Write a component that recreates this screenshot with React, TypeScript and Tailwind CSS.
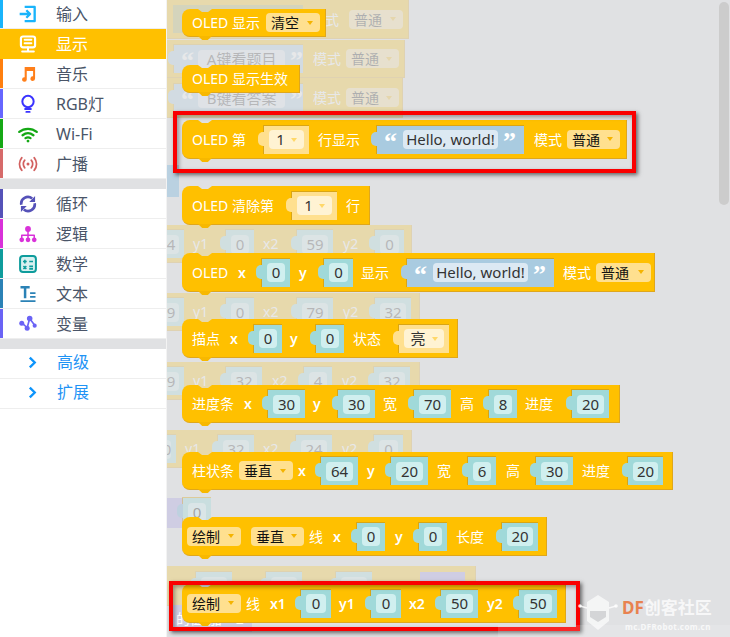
import type { JSX, ReactNode } from 'react'

const FONT = '[font-family:"Noto_Sans","Noto_Sans_CJK_SC",sans-serif]'

// Toolbox icons, drawn on a 24 box.
const Svg = ({ children, className }: { children: ReactNode; className: string }): JSX.Element => (
  <svg viewBox="0 0 24 24" className={`h-[20px] w-[20px] ${className}`} fill="none" stroke="currentColor" strokeLinecap="round" strokeLinejoin="round">
    {children}
  </svg>
)

const icons: Record<string, JSX.Element> = {
  input: (
    <Svg className="text-[#19b4fb]">
      <path d="M8 3.500h12v17H8" strokeWidth="2.800" strokeLinecap="butt" />
      <path d="M2 12h12M10 7.500l4.500 4.500-4.500 4.500" strokeWidth="2.800" strokeLinecap="butt" />
    </Svg>
  ),
  display: (
    <Svg className="text-white">
      <rect x="3.500" y="3" width="17" height="13" rx="2.500" strokeWidth="2.600" />
      <path d="M8 7h8M8 11h8M12 16v4M5 21h14" strokeWidth="2.400" />
    </Svg>
  ),
  music: (
    <Svg className="text-[#ff7f1a]">
      <path d="M8 3.500h12.500v14a2.800 2.800 0 1 1-2.400-2.700V8.500H10.500v10a2.800 2.800 0 1 1-2.500-2.700z" fill="currentColor" stroke="none" />
    </Svg>
  ),
  light: (
    <Svg className="text-[#3a33ff]">
      <circle cx="12" cy="9" r="6.800" strokeWidth="2.400" />
      <path d="M8.500 18h7M10 21.500h4" strokeWidth="2.200" />
    </Svg>
  ),
  wifi: (
    <Svg className="text-[#15a815]">
      <path d="M1.500 9.500c6-5 15-5 21 0M5.500 13.500c4-3.200 9-3.200 13 0M9 17c2-1.300 4-1.300 6 0" strokeWidth="2.700" />
      <circle cx="12" cy="20.500" r="1.700" fill="currentColor" stroke="none" />
    </Svg>
  ),
  radio: (
    <Svg className="text-[#d2605f]">
      <circle cx="12" cy="12" r="1.800" fill="currentColor" stroke="none" />
      <path d="M8 7.500c-2 2.500-2 6.500 0 9M16 7.500c2 2.500 2 6.500 0 9M4.500 4.500c-3.500 4.500-3.500 10.500 0 15M19.500 4.500c3.500 4.500 3.500 10.500 0 15" strokeWidth="2.300" />
    </Svg>
  ),
  loop: (
    <Svg className="text-[#5552b8]">
      <path d="M4 13a8 8 0 0 1 13-7.500M20 11a8 8 0 0 1-13 7.500" strokeWidth="3.200" strokeLinecap="butt" />
      <path d="M20.500 2.500v7h-7zM3.500 21.500v-7h7z" fill="currentColor" stroke="none" />
    </Svg>
  ),
  logic: (
    <Svg className="text-[#d931d9]">
      <circle cx="12" cy="6" r="3.500" fill="currentColor" stroke="none" />
      <circle cx="4.500" cy="19" r="2.800" fill="currentColor" stroke="none" />
      <circle cx="12" cy="19" r="2.800" fill="currentColor" stroke="none" />
      <circle cx="19.500" cy="19" r="2.800" fill="currentColor" stroke="none" />
      <path d="M12 9v8M4.500 17v-3.500h15V17" strokeWidth="1.800" />
    </Svg>
  ),
  math: (
    <Svg className="text-[#0e9c9c]">
      <rect x="2.500" y="2.500" width="19" height="19" rx="3.500" fill="#d8f1f1" strokeWidth="2.400" />
      <path d="M6 9h4.500M8.250 6.800v4.500M13.500 9H18M6.500 14.500l3.500 3.500M10 14.500L6.500 18M13.500 14.800H18M13.500 17.800H18" strokeWidth="1.900" strokeLinecap="butt" />
    </Svg>
  ),
  text: (
    <Svg className="text-[#2b82b6]">
      <path d="M3 4h11M8.500 4v13" strokeWidth="3" strokeLinecap="butt" />
      <path d="M14.500 11H21M14.500 15.500H21M3 20.500h18" strokeWidth="2.200" strokeLinecap="butt" />
    </Svg>
  ),
  variable: (
    <Svg className="text-[#6a63f5]">
      <path d="M5 11l6 5.500 3-11 6 8" strokeWidth="2" />
      <circle cx="4.500" cy="11" r="3" fill="currentColor" stroke="none" />
      <circle cx="11" cy="17" r="3" fill="currentColor" stroke="none" />
      <circle cx="14" cy="5.500" r="3.300" fill="currentColor" stroke="none" />
      <circle cx="20" cy="14" r="2.500" fill="currentColor" stroke="none" />
    </Svg>
  ),
}

const Row = ({ name, icon, stripe, first }: { name: string; icon: string; stripe: string; first?: boolean }): JSX.Element => (
  <div className={`flex items-center border-b border-[#eeeeee] ${first ? 'h-[29px]' : 'h-[30px]'}`}>
    <span className={`h-full w-[3px] ${stripe}`} />
    <span className="ml-[14px] flex w-[22px] justify-center">{icons[icon]}</span>
    <span className="ml-[17px] text-[16px] text-[#4a5568]">{name}</span>
  </div>
)

const More = ({ name }: { name: string }): JSX.Element => (
  <div className="flex h-[30px] items-center border-b border-[#eeeeee] pb-[3px]">
    <svg viewBox="0 0 10 14" className="ml-[28px] h-[13px] w-[9px]" fill="none" stroke="#0d94fb" strokeWidth="2.600">
      <path d="M2 1.500l5.500 5.500L2 12.500" />
    </svg>
    <span className="ml-[20px] text-[16px] text-[#1e93f5]">{name}</span>
  </div>
)

const Sidebar = (): JSX.Element => (
  <aside className="z-10 h-full w-[167px] shrink-0 border-r border-[#f3f3f3] bg-white">
    <Row first name="输入" icon="input" stripe="bg-[#19b4fb]" />
    <div className="flex h-[30px] items-center bg-[#ffc000]">
      <span className="ml-[17px] flex w-[22px] justify-center">{icons.display}</span>
      <span className="ml-[17px] text-[16px] text-white">显示</span>
    </div>
    <Row name="音乐" icon="music" stripe="bg-[#ff7f0e]" />
    <Row name="RGB灯" icon="light" stripe="bg-[#6666ff]" />
    <Row name="Wi-Fi" icon="wifi" stripe="bg-[#15a815]" />
    <Row name="广播" icon="radio" stripe="bg-[#d66a6a]" />
    <div className="h-[10px] bg-[#e0e1e3]" />
    <Row name="循环" icon="loop" stripe="bg-[#5552b8]" />
    <Row name="逻辑" icon="logic" stripe="bg-[#d931d9]" />
    <Row name="数学" icon="math" stripe="bg-[#0e9c9c]" />
    <Row name="文本" icon="text" stripe="bg-[#2b82b6]" />
    <Row name="变量" icon="variable" stripe="bg-[#6a63f5]" />
    <div className="h-[10px] bg-[#e0e1e3]" />
    <More name="高级" />
    <More name="扩展" />
  </aside>
)

// --- blocks ---

const Block = ({ className, children, plain }: { className: string; children: ReactNode; plain?: boolean }): JSX.Element => (
  <div
    className={`absolute flex items-center border-r border-b border-[#dfa71c] bg-[#ffc000] text-[14px] text-white ${
      plain ? '' : 'rounded-l-[8px] [clip-path:polygon(0_0,16px_0,20px_3px,26px_3px,30px_0,100%_0,100%_100%,30px_100%,26px_calc(100%_+_4px),20px_calc(100%_+_4px),16px_100%,0_100%)]'
    } ${className}`}
  >
    {children}
    {!plain && <span className="absolute top-full left-[16px] h-[4px] w-[14px] bg-[#f7b800] [clip-path:polygon(0_0,100%_0,70%_100%,30%_100%)]" />}
  </div>
)

const T = ({ className, children }: { className: string; children: ReactNode }): JSX.Element => (
  <span className={`shrink-0 whitespace-pre ${className}`}>{children}</span>
)

const Tab = ({ className }: { className: string }): JSX.Element => (
  <span className={`absolute top-[6px] -left-[6px] h-[14px] w-[7px] rounded-l-[5px] ${className}`} />
)

const Caret = ({ className }: { className: string }): JSX.Element => (
  <span className={`h-0 w-0 border-x-[3px] border-t-[4px] border-x-transparent ${className}`} />
)

// Number socket; tone switches to the pale yellow field sockets.
const Socket = ({ className, value, yellow }: { className: string; value: string; yellow?: boolean }): JSX.Element => (
  <span
    className={`relative flex h-[29px] shrink-0 items-center justify-center border-t border-l border-[#d9a514] ${yellow ? 'bg-[#ffe08f]' : 'bg-[#a0d9d9]'} ${className}`}
  >
    <Tab className={yellow ? 'bg-[#ffe08f]' : 'bg-[#a0d9d9]'} />
    <span className={`mx-[5px] flex h-[19px] grow items-center justify-center rounded-[4px] text-[15px] text-[#333333] ${yellow ? 'gap-[6px] bg-[#fff3d3]' : 'bg-[#d0efef]'}`}>
      {value}
      {yellow && <Caret className="border-t-[#ffd869]" />}
    </span>
  </span>
)

const Str = ({ className, value }: { className: string; value: string }): JSX.Element => (
  <span className={`relative flex h-[29px] shrink-0 items-center border-t border-l border-[#d9a514] bg-[#a9cbe0] ${className}`}>
    <Tab className="bg-[#a9cbe0]" />
    <span className="ml-[7px] w-[19px] translate-y-[2px] text-[26px] leading-[20px] font-bold text-white [font-family:'Liberation_Serif',serif]">“</span>
    <span className="flex h-[19px] w-[95px] items-center justify-center rounded-[4px] bg-[#dce9f3] text-[15px] text-[#333333]">{value}</span>
    <span className="ml-[5px] translate-y-[2px] text-[26px] leading-[20px] font-bold text-white [font-family:'Liberation_Serif',serif]">”</span>
  </span>
)

const Drop = ({ className, value }: { className: string; value: string }): JSX.Element => (
  <span className={`flex h-[19px] shrink-0 items-center rounded-[4px] bg-[#ffe08f] pl-[5px] text-[14px] text-[#111111] ${className}`}>
    <span className="grow">{value}</span>
    <Caret className="mr-[7px] border-t-[#f5b400]" />
  </span>
)

const GHOST = 'opacity-[0.24]'

const Ghosts = (): JSX.Element => (
  <>
    <Block plain className={`${GHOST} top-0 -left-[10px] h-[39px] w-[252px]`}>
      <T className="ml-[168px] w-[20px]">式</T>
      <Drop className="ml-[4px] w-[54px]" value="普通" />
    </Block>
    <span className="absolute top-[5px] left-[6px] h-[28px] w-[130px] bg-[#a9cbe0] opacity-[0.3]" />

    <Block plain className={`${GHOST} top-[40px] -left-[10px] h-[38px] w-[248px]`}>
      <Str className="ml-[16px] w-[130px]" value="A键看题目" />
      <T className="ml-[10px] w-[28px]">模式</T>
      <Drop className="ml-[5px] w-[53px]" value="普通" />
    </Block>
    <Block plain className={`${GHOST} top-[78px] -left-[10px] h-[40px] w-[246px]`}>
      <Str className="ml-[16px] w-[130px]" value="B键看答案" />
      <T className="ml-[10px] w-[28px]">模式</T>
      <Drop className="ml-[5px] w-[53px]" value="普通" />
    </Block>
    <span className="absolute top-[165px] left-0 h-[32px] w-[12px] bg-[#a9cbe0] opacity-[0.7]" />

    <Block plain className={`${GHOST} top-[225px] -left-[10px] h-[38px] w-[255px]`}>
      <Socket className="w-[27px]" value="4" />
      <T className="ml-[9px] w-[16px]">y1</T>
      <Socket className="ml-[16px] w-[29px]" value="0" />
      <T className="ml-[9px] w-[16px]">x2</T>
      <Socket className="ml-[17px] w-[37px]" value="59" />
      <T className="ml-[10px] w-[16px]">y2</T>
      <Socket className="ml-[15px] w-[30px]" value="0" />
    </Block>
    <Block plain className={`${GHOST} top-[293px] -left-[10px] h-[38px] w-[263px]`}>
      <Socket className="w-[27px]" value="9" />
      <T className="ml-[9px] w-[16px]">y1</T>
      <Socket className="ml-[16px] w-[29px]" value="0" />
      <T className="ml-[9px] w-[16px]">x2</T>
      <Socket className="ml-[17px] w-[37px]" value="79" />
      <T className="ml-[10px] w-[16px]">y2</T>
      <Socket className="ml-[15px] w-[37px]" value="32" />
    </Block>
    <Block plain className={`${GHOST} top-[362px] -left-[10px] h-[38px] w-[263px]`}>
      <Socket className="w-[27px]" value="9" />
      <T className="ml-[9px] w-[16px]">y1</T>
      <Socket className="ml-[16px] w-[37px]" value="32" />
      <T className="ml-[10px] w-[16px]">x2</T>
      <Socket className="ml-[15px] w-[29px]" value="4" />
      <T className="ml-[10px] w-[16px]">y2</T>
      <Socket className="ml-[15px] w-[37px]" value="32" />
    </Block>
    <Block plain className={`${GHOST} top-[430px] -left-[10px] h-[38px] w-[255px]`}>
      <Socket className="w-[19px]" value="0" />
      <T className="ml-[9px] w-[16px]">y1</T>
      <Socket className="ml-[16px] w-[37px]" value="32" />
      <T className="ml-[9px] w-[16px]">x2</T>
      <Socket className="ml-[16px] w-[37px]" value="24" />
      <T className="ml-[10px] w-[16px]">y2</T>
      <Socket className="ml-[15px] w-[30px]" value="0" />
    </Block>

    <span className="absolute top-[498px] left-0 h-[30px] w-[16px] bg-[#cfcde3]" />
    <Socket className="absolute top-[497px] left-[15px] w-[29px] opacity-[0.35]" value="0" />

    <Block plain className={`${GHOST} top-[566px] -left-[10px] h-[40px] w-[319px]`}>
      <Socket className="ml-[38px] w-[37px]" value="" />
      <Socket className="ml-[33px] w-[37px]" value="" />
      <Socket className="ml-[33px] w-[37px]" value="" />
    </Block>
    <span className="absolute top-[572px] left-[253px] h-[30px] w-[45px] bg-[#cfcde3]" />
    <div className="absolute top-[605px] left-[5px] flex h-[27px] w-[80px] items-center bg-[#cfcde3] pl-[4px] text-[14px] text-white">的值 加 <span className="ml-[14px]">2</span></div>
  </>
)

const Blocks = (): JSX.Element => (
  <>
    <Block className="top-[9px] left-[15px] h-[28px] w-[144px]">
      <T className="ml-[10px] w-[69px]">OLED 显示</T>
      <Drop className="ml-[5px] w-[54px]" value="清空" />
    </Block>
    <Block className="top-[65px] left-[15px] h-[28px] w-[118px]">
      <T className="ml-[10px] w-[98px]">OLED 显示生效</T>
    </Block>
    <Block className="top-[120px] left-[15px] h-[39px] w-[445px]">
      <T className="ml-[10px] w-[55px]">OLED 第</T>
      <Socket yellow className="ml-[16px] w-[46px]" value="1" />
      <T className="ml-[9px] w-[42px]">行显示</T>
      <Str className="ml-[16px] w-[148px]" value="Hello, world!" />
      <T className="ml-[10px] w-[28px]">模式</T>
      <Drop className="ml-[5px] w-[53px]" value="普通" />
    </Block>
    <Block className="top-[186px] left-[15px] h-[39px] w-[188px]">
      <T className="ml-[10px] w-[83px]">OLED 清除第</T>
      <Socket yellow className="ml-[16px] w-[46px]" value="1" />
      <T className="ml-[9px] w-[14px]">行</T>
    </Block>
    <Block className="top-[253px] left-[15px] h-[39px] w-[473px]">
      <T className="ml-[10px] w-[36px]">OLED</T>
      <T className="ml-[10px] w-[8px] font-semibold">x</T>
      <Socket className="ml-[15px] w-[29px]" value="0" />
      <T className="ml-[9px] w-[8px] font-semibold">y</T>
      <Socket className="ml-[16px] w-[30px]" value="0" />
      <T className="ml-[8px] w-[29px]">显示</T>
      <Str className="ml-[16px] w-[148px]" value="Hello, world!" />
      <T className="ml-[9px] w-[28px]">模式</T>
      <Drop className="ml-[5px] w-[55px]" value="普通" />
    </Block>
    <Block className="top-[319px] left-[15px] h-[39px] w-[276px]">
      <T className="ml-[10px] w-[28px]">描点</T>
      <T className="ml-[10px] w-[8px] font-semibold">x</T>
      <Socket className="ml-[15px] w-[29px]" value="0" />
      <T className="ml-[8px] w-[8px] font-semibold">y</T>
      <Socket className="ml-[17px] w-[29px]" value="0" />
      <T className="ml-[9px] w-[29px]">状态</T>
      <Socket yellow className="ml-[16px] w-[51px]" value="亮" />
    </Block>
    <Block className="top-[385px] left-[15px] h-[38px] w-[438px]">
      <T className="ml-[10px] w-[42px]">进度条</T>
      <T className="ml-[10px] w-[8px] font-semibold">x</T>
      <Socket className="ml-[15px] w-[38px]" value="30" />
      <T className="ml-[8px] w-[8px] font-semibold">y</T>
      <Socket className="ml-[16px] w-[38px]" value="30" />
      <T className="ml-[8px] w-[15px]">宽</T>
      <Socket className="ml-[15px] w-[38px]" value="70" />
      <T className="ml-[9px] w-[14px]">高</T>
      <Socket className="ml-[14px] w-[29px]" value="8" />
      <T className="ml-[8px] w-[29px]">进度</T>
      <Socket className="ml-[17px] w-[38px]" value="20" />
    </Block>
    <Block className="top-[452px] left-[15px] h-[38px] w-[491px]">
      <T className="ml-[10px] w-[42px]">柱状条</T>
      <Drop className="ml-[5px] w-[54px]" value="垂直" />
      <T className="ml-[5px] w-[8px] font-semibold">x</T>
      <Socket className="ml-[14px] w-[38px]" value="64" />
      <T className="ml-[9px] w-[8px] font-semibold">y</T>
      <Socket className="ml-[15px] w-[38px]" value="20" />
      <T className="ml-[9px] w-[14px]">宽</T>
      <Socket className="ml-[16px] w-[29px]" value="6" />
      <T className="ml-[10px] w-[14px]">高</T>
      <Socket className="ml-[15px] w-[38px]" value="30" />
      <T className="ml-[9px] w-[29px]">进度</T>
      <Socket className="ml-[16px] w-[36px]" value="20" />
    </Block>
    <Block className="top-[517px] left-[15px] h-[39px] w-[365px]">
      <Drop className="ml-[5px] w-[54px]" value="绘制" />
      <Drop className="ml-[10px] w-[53px]" value="垂直" />
      <T className="ml-[5px] w-[14px]">线</T>
      <T className="ml-[10px] w-[8px] font-semibold">x</T>
      <Socket className="ml-[15px] w-[29px]" value="0" />
      <T className="ml-[10px] w-[8px] font-semibold">y</T>
      <Socket className="ml-[15px] w-[29px]" value="0" />
      <T className="ml-[9px] w-[29px]">长度</T>
      <Socket className="ml-[16px] w-[37px]" value="20" />
    </Block>
    <Block className="top-[584px] left-[15px] h-[39px] w-[384px]">
      <Drop className="ml-[5px] w-[54px]" value="绘制" />
      <T className="ml-[5px] w-[14px]">线</T>
      <T className="ml-[10px] w-[15px] font-semibold">x1</T>
      <Socket className="ml-[15px] w-[31px]" value="0" />
      <T className="ml-[8px] w-[15px] font-semibold">y1</T>
      <Socket className="ml-[16px] w-[31px]" value="0" />
      <T className="ml-[8px] w-[16px] font-semibold">x2</T>
      <Socket className="ml-[15px] w-[38px]" value="50" />
      <T className="ml-[9px] w-[16px] font-semibold">y2</T>
      <Socket className="ml-[15px] w-[39px]" value="50" />
    </Block>
  </>
)

const Watermark = (): JSX.Element => (
  <div className="pointer-events-none absolute right-0 bottom-0 h-[45px] w-[152px]">
    <div className="absolute right-0 bottom-0 h-[12px] w-[232px] bg-white/15" />
    {/* robot head logo */}
    <svg viewBox="0 0 40 40" className="absolute top-[2px] left-0 h-[40px] w-[40px]">
      <path d="M2 12l7 2M38 12l-7 2" stroke="#ffffff" strokeOpacity="0.8" strokeWidth="1.500" />
      <circle cx="2" cy="12" r="1.800" fill="#ffffff" fillOpacity="0.85" />
      <circle cx="38" cy="12" r="1.800" fill="#ffffff" fillOpacity="0.85" />
      <path d="M20 1l11 7v19l-11 9-11-9V8z" fill="#ffffff" fillOpacity="0.65" />
      <path d="M12 17h16v6l-8 5-8-5z" fill="#d4d5d7" />
    </svg>
    <div className="absolute top-[5px] left-[44px] text-[17px] leading-[22px] font-bold whitespace-nowrap text-white/75">
      <span className="text-[#e8824f]">DF</span>创客社区
    </div>
    <div className="absolute top-[30px] left-[47px] text-[8px] leading-[10px] font-bold tracking-[0.4px] whitespace-nowrap text-white/75">mc.DFRobot.com.cn</div>
  </div>
)

const FRAME = 'absolute border-[4px] border-[#fa0000] shadow-[2px_2px_4px_rgba(0,0,0,0.55),inset_2px_2px_4px_rgba(0,0,0,0.35)]'

const App = (): JSX.Element => (
  <div className={`flex h-[637px] w-[730px] overflow-hidden bg-[#e0e1e3] ${FONT}`}>
    <Sidebar />
    <main className="relative flex-1 overflow-hidden">
      <Ghosts />
      <Blocks />
      {/* annotation frames */}
      <div className={`${FRAME} top-[111px] left-[6px] h-[62px] w-[463px]`} />
      <div className={`${FRAME} top-[581px] left-[2px] h-[50px] w-[411px]`} />
      <span className="absolute top-[2px] right-[1px] h-[203px] w-[10px] rounded-full bg-[#cccccc]" />
      <Watermark />
    </main>
  </div>
)

export default App
